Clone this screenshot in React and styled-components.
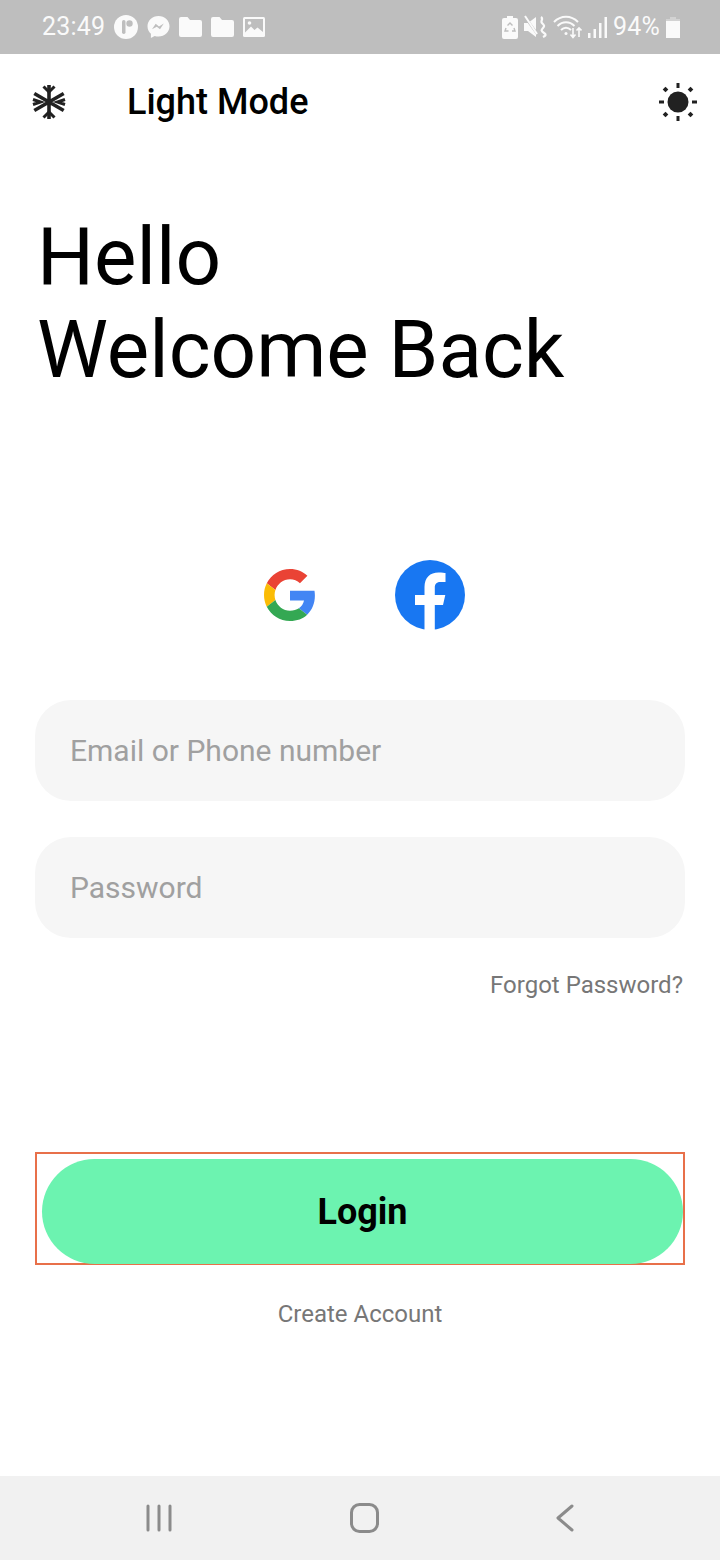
import React from "react";
import styled, { createGlobalStyle } from "styled-components";

const Global = createGlobalStyle`
  html, body { margin: 0; padding: 0; background: #fff; }
  * { box-sizing: border-box; }
  body { font-family: Roboto, "Liberation Sans", sans-serif; }
`;

const Phone = styled.div`
  width: 720px;
  height: 1560px;
  display: flex;
  flex-direction: column;
  background: #fff;
  overflow: hidden;
`;

const StatusBar = styled.div`
  height: 54px;
  flex: none;
  background: #bebebe;
  display: flex;
  align-items: center;
  justify-content: space-between;
  padding: 0 40px 0 42px;
  color: #fafafa;
`;

const StatusGroup = styled.div`
  display: flex;
  align-items: center;
  gap: ${(p) => p.$gap || 8}px;
`;

const StatusText = styled.span`
  font-size: 25px;
  line-height: 54px;
  margin-right: ${(p) => p.$mr || 0}px;
  letter-spacing: 0.2px;
`;

const Header = styled.header`
  height: 96px;
  flex: none;
  display: flex;
  align-items: center;
  padding: 0 22px 0 30px;
`;

const Title = styled.h1`
  margin: 0 0 0 59px;
  flex: 1;
  font-size: 36px;
  font-weight: 500;
  line-height: 42px;
  color: #000;
`;

const Main = styled.main`
  flex: 1;
  display: flex;
  flex-direction: column;
  padding: 0 35px;
`;

const Greeting = styled.h2`
  margin: 61px 0 0 2px;
  font-size: 80px;
  font-weight: 400;
  line-height: 93px;
  color: #000;
`;

const Socials = styled.div`
  margin-top: 163px;
  height: 70px;
  display: flex;
  align-items: center;
  padding-left: 229px;
  gap: 79px;
`;

const Field = styled.div`
  height: 101px;
  border-radius: 36px;
  background: #f6f6f6;
  display: flex;
  align-items: center;
  padding-left: 35px;
  margin-top: ${(p) => p.$mt}px;
  font-size: 30px;
  color: #a0a0a0;
`;

const Forgot = styled.a`
  align-self: flex-end;
  margin: 33px 2px 0 0;
  font-size: 24px;
  line-height: 28px;
  color: #777;
`;

const LoginFrame = styled.div`
  margin-top: 153px;
  height: 113px;
  border: 2px solid #e8704a;
  padding: 5px 0 0 5px;
`;

const LoginButton = styled.button`
  display: block;
  width: 641px;
  height: 105px;
  border: 0;
  border-radius: 53px;
  background: #6cf3b0;
  color: #000;
  font-family: inherit;
  font-size: 36px;
  font-weight: 700;
  padding: 0;
`;

const Create = styled.a`
  align-self: center;
  margin-top: 35px;
  font-size: 24px;
  line-height: 28px;
  color: #777;
`;

const NavBar = styled.nav`
  height: 84px;
  flex: none;
  background: #f1f1f1;
  display: flex;
  align-items: center;
  padding: 0 146px;
  justify-content: space-between;
`;

const Snowflake = () => (
  <svg width="38" height="38" viewBox="0 0 38 38" fill="none" stroke="#212121" strokeWidth="3.6">
    <path d="M19 2v34M4.3 10.5l29.4 17M4.3 27.5l29.4-17" />
    <path d="M13.5 3.5 19 9l5.5-5.5M13.5 34.500 19 29l5.5 5.500M3 16.500 10.500 19 3 21.500M35 16.500 27.500 19 35 21.500" strokeWidth="3" />
  </svg>
);

const Sun = () => (
  <svg width="40" height="40" viewBox="0 0 40 40" fill="#212121">
    <circle cx="20" cy="20" r="10.500" />
    <rect x="18.500" y="1" width="3" height="5" />
    <rect x="18.500" y="34" width="3" height="5" />
    <rect x="1" y="18.500" width="5" height="3" />
    <rect x="34" y="18.500" width="5" height="3" />
    <rect x="5.500" y="5.500" width="4" height="4" transform="rotate(45 7.500 7.500)" />
    <rect x="30.500" y="5.500" width="4" height="4" transform="rotate(45 32.500 7.500)" />
    <rect x="5.500" y="30.500" width="4" height="4" transform="rotate(45 7.500 32.500)" />
    <rect x="30.500" y="30.500" width="4" height="4" transform="rotate(45 32.500 32.500)" />
  </svg>
);

const RoundP = () => (
  <svg width="24" height="24" viewBox="0 0 24 24">
    <circle cx="12" cy="12" r="12" fill="#fafafa" />
    <rect x="8" y="5" width="3.500" height="14" rx="1.700" fill="#bebebe" />
    <circle cx="15.500" cy="8.500" r="3.200" fill="#bebebe" />
  </svg>
);

const Messenger = () => (
  <svg width="23" height="24" viewBox="0 0 23 24">
    <path d="M11.500 1C5.300 1 .5 5.400.5 11.300c0 3.100 1.300 5.700 3.400 7.500V23l3.800-2.100c1.200.4 2.500.6 3.800.6 6.200 0 11-4.400 11-10.200S17.700 1 11.500 1Z" fill="#fafafa" />
    <path d="m5 14.300 3.700-5.500 3.300 2.600 4.800-2.800-3.800 5.600-3.200-2.500Z" fill="#bebebe" />
  </svg>
);

const Folder = () => (
  <svg width="23" height="20" viewBox="0 0 23 20">
    <path d="M2 0h6.500l2.500 3h10a2 2 0 0 1 2 2v13a2 2 0 0 1-2 2H2a2 2 0 0 1-2-2V2a2 2 0 0 1 2-2Z" fill="#fafafa" />
  </svg>
);

const Picture = () => (
  <svg width="22" height="20" viewBox="0 0 22 20">
    <rect width="22" height="20" rx="1.500" fill="#fafafa" />
    <rect x="2" y="2" width="18" height="16" fill="#bebebe" />
    <circle cx="6.500" cy="6" r="1.800" fill="#fafafa" />
    <path d="M2 15.500 8 9.500l3.500 3.500 3-2.500L20 15v3H2Z" fill="#fafafa" />
  </svg>
);

const BatterySaver = () => (
  <svg width="16" height="23" viewBox="0 0 16 23">
    <path d="M5 0h6v2h3a2 2 0 0 1 2 2v17a2 2 0 0 1-2 2H2a2 2 0 0 1-2-2V4a2 2 0 0 1 2-2h3Z" fill="#fafafa" />
    <path d="M5.500 9.500 8 7l2.500 2.500M12 12l1 3h-3M4 12l-1 3h3.500" fill="none" stroke="#bebebe" strokeWidth="1.400" />
  </svg>
);

const Mute = () => (
  <svg width="23" height="24" viewBox="0 0 23 24" fill="none">
    <path d="M0 8h4l8-6v20l-8-6H0Z" fill="#fafafa" />
    <path d="M1 2 14 20" stroke="#bebebe" strokeWidth="2.500" />
    <path d="M1 1 13 19" stroke="#fafafa" strokeWidth="2" />
    <path d="M17 2c3 2-1 4 1 6s3 3 1 5-2 3 1 5 1 3-1 4" stroke="#fafafa" strokeWidth="2.200" />
  </svg>
);

const Wifi = () => (
  <svg width="29" height="24" viewBox="0 0 29 24" fill="none" stroke="#fafafa">
    <path d="M1 7c7-7 17-7 24 0M4.500 11c5-5 12-5 17 0M8 15c3-3 7-3 10 0" strokeWidth="2" />
    <circle cx="13" cy="18.500" r="1.500" fill="#fafafa" stroke="none" />
    <path d="M20 13v9M17.500 19.500l2.500 3 2.500-3M26 22v-9M23.500 15.500l2.500-2.500 2.500 2.500" strokeWidth="1.600" />
  </svg>
);

const Signal = () => (
  <svg width="19" height="21" viewBox="0 0 19 21" fill="#fafafa">
    <rect x="0" y="16" width="2.500" height="5" />
    <rect x="5.500" y="12" width="2.500" height="9" />
    <rect x="11" y="6" width="2.500" height="15" />
    <rect x="16.500" y="0" width="2.500" height="21" />
  </svg>
);

const Battery = () => (
  <svg width="14" height="21" viewBox="0 0 14 21">
    <rect x="4" y="0" width="6" height="3" fill="#d2d2d2" />
    <rect x="0" y="2" width="14" height="3" fill="#d2d2d2" />
    <rect x="0" y="4" width="14" height="17" fill="#fafafa" />
  </svg>
);

const Google = () => (
  <svg width="52" height="54" viewBox="0 0 48 48">
    <path fill="#EA4335" d="M24 9.500c3.540 0 6.710 1.220 9.210 3.600l6.850-6.850C35.900 2.380 30.470 0 24 0 14.620 0 6.510 5.380 2.560 13.220l7.980 6.190C12.430 13.720 17.740 9.500 24 9.500z" />
    <path fill="#4285F4" d="M46.980 24.550c0-1.570-.15-3.090-.38-4.550H24v9.020h12.940c-.58 2.960-2.260 5.480-4.780 7.180l7.730 6c4.510-4.180 7.090-10.360 7.090-17.650z" />
    <path fill="#FBBC05" d="M10.530 28.590c-.48-1.450-.76-2.990-.76-4.590s.27-3.140.76-4.590l-7.980-6.190C.92 16.460 0 20.120 0 24c0 3.880.92 7.540 2.560 10.780l7.970-6.190z" />
    <path fill="#34A853" d="M24 48c6.480 0 11.930-2.130 15.890-5.810l-7.730-6c-2.150 1.450-4.920 2.300-8.160 2.300-6.260 0-11.570-4.220-13.470-9.910l-7.980 6.190C6.510 42.620 14.620 48 24 48z" />
  </svg>
);

const Facebook = () => (
  <svg width="70" height="70" viewBox="0 0 70 70">
    <circle cx="35" cy="35" r="35" fill="#1877f2" />
    <path fill="#fff" d="M29.500 70V45H20V35h9.500v-8c0-9.500 5.600-14.500 14-14.500 3.500 0 6.500.5 7 .6v9h-5c-4.500 0-5.700 2.500-5.700 5.600V35h10.500L48 45h-8.200v25Z" />
  </svg>
);

const NavRecents = () => (
  <svg width="26" height="28" viewBox="0 0 26 28" stroke="#8b8b8b" strokeWidth="3" strokeLinecap="round">
    <path d="M2 2v24M13 2v24M24 2v24" />
  </svg>
);

const NavHome = () => (
  <svg width="29" height="30" viewBox="0 0 29 30" fill="none" stroke="#8b8b8b" strokeWidth="3">
    <rect x="1.500" y="1.500" width="26" height="27" rx="8" />
  </svg>
);

const NavBack = () => (
  <svg width="18" height="28" viewBox="0 0 18 28" fill="none" stroke="#8b8b8b" strokeWidth="3" strokeLinecap="round" strokeLinejoin="round">
    <path d="M16 2 2 14l14 12" />
  </svg>
);

export default function App() {
  return (
    <Phone>
      <Global />
      <StatusBar>
        <StatusGroup $gap={9}>
          <StatusText $mr={0}>23:49</StatusText>
          <RoundP />
          <Messenger />
          <Folder />
          <Folder />
          <Picture />
        </StatusGroup>
        <StatusGroup $gap={6}>
          <BatterySaver />
          <Mute />
          <Wifi />
          <Signal />
          <StatusText>94%</StatusText>
          <Battery />
        </StatusGroup>
      </StatusBar>
      <Header>
        <Snowflake />
        <Title>Light Mode</Title>
        <Sun />
      </Header>
      <Main>
        <Greeting>
          Hello
          <br />
          Welcome Back
        </Greeting>
        <Socials>
          <Google />
          <Facebook />
        </Socials>
        <Field $mt={70}>Email or Phone number</Field>
        <Field $mt={36}>Password</Field>
        <Forgot>Forgot Password?</Forgot>
        <LoginFrame>
          <LoginButton>Login</LoginButton>
        </LoginFrame>
        <Create>Create Account</Create>
      </Main>
      <NavBar>
        <NavRecents />
        <NavHome />
        <NavBack />
      </NavBar>
    </Phone>
  );
}
